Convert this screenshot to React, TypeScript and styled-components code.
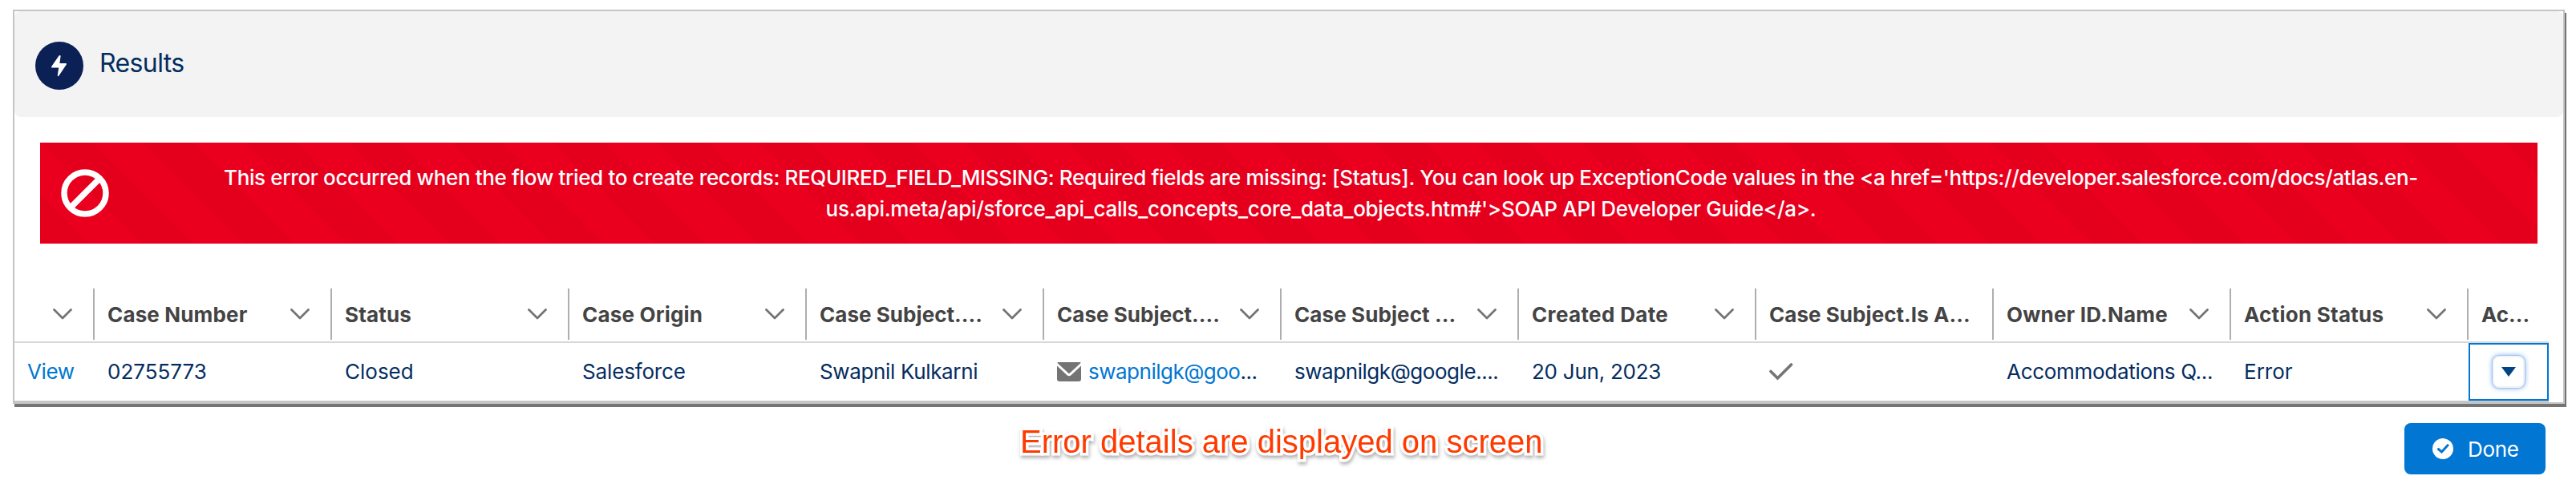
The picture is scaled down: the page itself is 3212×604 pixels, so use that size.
import React from "react";
import styled, { createGlobalStyle } from "styled-components";

const Global = createGlobalStyle`
  * { box-sizing: border-box; }
  body { margin: 0; background: #fff; font-family: Inter, "Liberation Sans", sans-serif; font-size: 26px; line-height: 39px; color: #032d60; }
`;
const Page = styled.div`
  height: 604px;
  padding: 12px 14px 0 16px;
  overflow: hidden;
`;
const Panel = styled.section`
  width: 3182px;
  height: 492px;
  border: 2px solid #c4c4c4;
  box-shadow: 2px 4px 0 #747474;
`;
const Header = styled.header`
  display: flex;
  align-items: center;
  height: 132px;
  padding: 4px 26px 0;
  gap: 20px;
  background: #f3f3f3;
  border-radius: 8px;
`;
const Badge = styled.span`
  display: flex;
  width: 60px;
  height: 60px;
  border-radius: 50%;
  background: #0b2055;
`;
const Title = styled.h2`
  margin: 0 0 6px;
  font-size: 32px;
  font-weight: 400;
  line-height: 40px;
  letter-spacing: -0.6px;
`;
const Banner = styled.div`
  display: flex;
  align-items: center;
  height: 126px;
  margin: 32px 32px 0;
  padding-left: 26px;
  color: #fff;
  background-color: #ea001e;
  background-image: linear-gradient(45deg, rgba(0,0,0,.025) 25%, transparent 25%, transparent 50%, rgba(0,0,0,.025) 50%, rgba(0,0,0,.025) 75%, transparent 75%, transparent);
  background-size: 128px 128px;
`;
const Message = styled.p`
  flex: 1;
  margin: 0;
  padding: 0 66px 0 60px;
  text-align: center;
  font-weight: 450;
`;
const Line = styled.span<{ $track: number }>`
  display: block;
  white-space: nowrap;
  letter-spacing: ${(p) => p.$track}px;
`;
const Table = styled.div`
  width: 3160px;
  margin-top: 56px;
`;
const Row = styled.div<{ $head?: boolean }>`
  display: grid;
  grid-template-columns: 100px repeat(10, 296px) 100px;
  height: ${(p) => (p.$head ? 68 : 74)}px;
  border-bottom: 2px solid ${(p) => (p.$head ? "#d8d8d8" : "#c6c6c6")};
`;
const HeadCell = styled.div<{ $plain?: boolean }>`
  display: flex;
  align-items: center;
  justify-content: space-between;
  height: 64px;
  padding: 0 26px 0 16px;
  border-right: ${(p) => (p.$plain ? "0" : "2px solid #aeaeae")};
  color: #444;
  font-weight: 700;
`;
const Label = styled.span<{ $track?: number }>`
  white-space: nowrap;
  letter-spacing: ${(p) => p.$track ?? 0}px;
`;
const Ellipsis = styled.span`
  color: #032d60;
`;
const Cell = styled.div<{ $link?: boolean }>`
  display: flex;
  align-items: center;
  gap: 9px;
  padding: 0 16px 1px;
  color: ${(p) => (p.$link ? "#0176d3" : "#032d60")};
`;
const FocusCell = styled.div`
  display: flex;
  align-items: center;
  justify-content: center;
  border: 2px solid #0176d3;
`;
const MenuButton = styled.button`
  display: flex;
  align-items: center;
  justify-content: center;
  width: 40px;
  height: 40px;
  padding: 0;
  border: 2px solid #f3f3f3;
  border-radius: 8px;
  background: #fff;
  box-shadow: 0 0 0 1px #a5c6f2, 0 0 6px #5c9df0;
`;
const Footer = styled.footer`
  display: flex;
  justify-content: space-between;
  align-items: flex-start;
  padding: 24px 24px 0 1256px;
`;
const Note = styled.span`
  font-family: "Liberation Sans", Arial, sans-serif;
  font-size: 40px;
  line-height: 46px;
  color: #ff3a00;
  -webkit-text-stroke: 7px #fff;
  stroke-linejoin: round;
  paint-order: stroke fill;
  filter: drop-shadow(1px 3px 2px rgba(0, 0, 0, 0.3));
`;
const Done = styled.button`
  display: flex;
  align-items: center;
  width: 176px;
  height: 64px;
  padding: 0 0 0 35px;
  gap: 18px;
  border: 0;
  border-radius: 8px;
  background: #0176d3;
  color: #fff;
  font: inherit;
`;

const Chevron = () => (
  <svg width="24" height="14" viewBox="0 0 24 14" fill="none" stroke="#747474" strokeWidth="2.8" strokeLinecap="round" strokeLinejoin="round">
    <path d="M1.5 1.5 12 12 22.5 1.5" />
  </svg>
);

const heads: { text: string; track?: number; menu: boolean }[] = [
  { text: "Case Number", track: 0.15, menu: true },
  { text: "Status", track: 0.15, menu: true },
  { text: "Case Origin", track: 0.2, menu: true },
  { text: "Case Subject....", track: 0.05, menu: true },
  { text: "Case Subject....", track: 0.05, menu: true },
  { text: "Case Subject ...", track: 0.1, menu: true },
  { text: "Created Date", track: 0.35, menu: true },
  { text: "Case Subject.Is A...", track: 0.05, menu: false },
  { text: "Owner ID.Name", track: 0.2, menu: true },
  { text: "Action Status", track: 0.25, menu: true },
];

export default function App() {
  return (
    <Page>
      <Global />
      <Panel>
        <Header>
          <Badge>
            <svg width="60" height="60" viewBox="0 0 60 60" fill="#fff">
              <path d="M29.5 17.5 20.2 31c-.5.8 0 1.5.8 1.5h8.2l-1.4 9.6c-.1 1.1 1 1.4 1.6.5l9.4-14.1c.5-.8 0-1.5-.8-1.5h-7.6l1.2-9c.1-1.1-1.2-1.5-1.9-.5Z" />
            </svg>
          </Badge>
          <Title>Results</Title>
        </Header>
        <Banner>
          <svg width="60" height="60" viewBox="0 0 60 60" fill="none" stroke="#fff" strokeWidth="7.5">
            <circle cx="30" cy="30" r="26" />
            <path d="M12 48 48 12" />
          </svg>
          <Message>
            <Line $track={-0.355}>This error occurred when the flow tried to create records: REQUIRED_FIELD_MISSING: Required fields are missing: [Status]. You can look up ExceptionCode values in the &lt;a href='https://developer.salesforce.com/docs/atlas.en-</Line>
            <Line $track={-0.285}>us.api.meta/api/sforce_api_calls_concepts_core_data_objects.htm#'&gt;SOAP API Developer Guide&lt;/a&gt;.</Line>
          </Message>
        </Banner>
        <Table>
          <Row $head>
            <HeadCell><span /><Chevron /></HeadCell>
            {heads.map((h, i) => (
              <HeadCell key={i}><Label $track={h.track}>{h.text}</Label>{h.menu && <Chevron />}</HeadCell>
            ))}
            <HeadCell $plain><Label>Ac...</Label></HeadCell>
          </Row>
          <Row>
            <Cell $link><Label $track={-0.4}>View</Label></Cell>
            <Cell><Label>02755773</Label></Cell>
            <Cell><Label>Closed</Label></Cell>
            <Cell><Label $track={-0.15}>Salesforce</Label></Cell>
            <Cell><Label $track={-0.35}>Swapnil Kulkarni</Label></Cell>
            <Cell $link>
              <svg width="30" height="24" viewBox="0 0 30 24">
                <path fill="#747474" d="M1.5 0h27Q30 0 29.3 1.2L16 13.5q-1 1-2 0L.7 1.2Q0 0 1.5 0ZM0 4.5 12.5 16.2q2.5 2.3 5 0L30 4.5V21q0 3-3 3H3q-3 0-3-3Z" />
              </svg>
              <Label $track={-0.5}>swapnilgk@goo<Ellipsis>...</Ellipsis></Label>
            </Cell>
            <Cell><Label $track={-0.45}>swapnilgk@google....</Label></Cell>
            <Cell><Label $track={-0.25}>20 Jun, 2023</Label></Cell>
            <Cell>
              <svg width="30" height="22" viewBox="0 0 30 22" fill="none" stroke="#747474" strokeWidth="3.6" strokeLinecap="round">
                <path d="M2 10.5 10.5 19 27.5 2" />
              </svg>
            </Cell>
            <Cell><Label $track={-0.3}>Accommodations Q...</Label></Cell>
            <Cell><Label>Error</Label></Cell>
            <FocusCell>
              <MenuButton><svg width="18" height="12" viewBox="0 0 18 12" fill="#014486"><path d="M0 0h18L9 12Z" /></svg></MenuButton>
            </FocusCell>
          </Row>
        </Table>
      </Panel>
      <Footer>
        <Note>Error details are displayed on screen</Note>
        <Done>
          <svg width="26" height="26" viewBox="0 0 26 26"><circle cx="13" cy="13" r="13" fill="#fff" /><path d="M7.5 13.5 11.5 17 19 8.7" fill="none" stroke="#0176d3" strokeWidth="3" strokeLinecap="round" /></svg>
          <Label $track={-0.3}>Done</Label>
        </Done>
      </Footer>
    </Page>
  );
}
